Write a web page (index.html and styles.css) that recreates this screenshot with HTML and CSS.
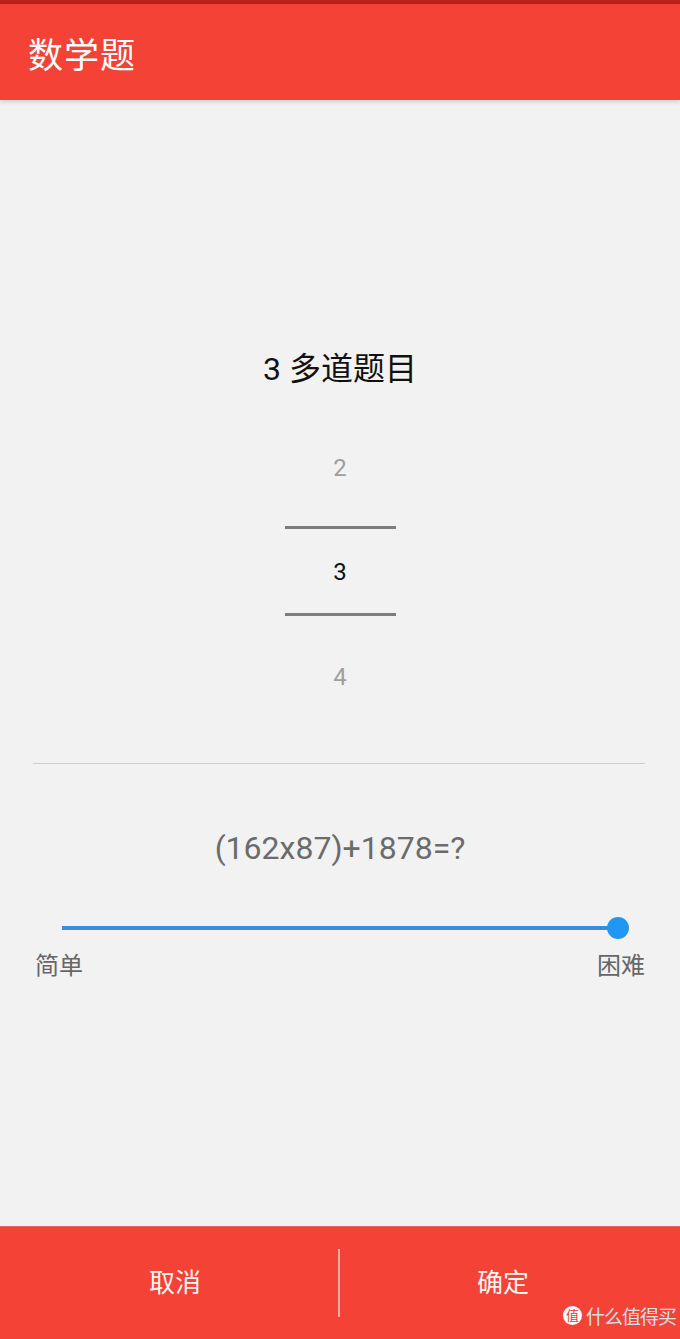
FILE: index.html
```html
<!DOCTYPE html>
<html lang="zh-CN">
<head>
    <meta charset="UTF-8">
    <meta name="viewport" content="width=device-width, initial-scale=1.0">
    <title>数学题</title>
    <link rel="stylesheet" href="styles.css">
</head>
<body>
    <div class="app">
        <div class="status-bar"></div>
        <header class="toolbar">
            <h1>数学题</h1>
        </header>

        <main class="content">
            <h2 class="count-title">3 多道题目</h2>

            <div class="picker">
                <div class="picker-item">2</div>
                <div class="picker-item selected">3</div>
                <div class="picker-item">4</div>
            </div>

            <hr class="divider">

            <div class="equation">(162x87)+1878=?</div>

            <div class="slider">
                <div class="slider-track">
                    <span class="slider-thumb"></span>
                </div>
            </div>
            <div class="slider-labels">
                <span>简单</span>
                <span>困难</span>
            </div>
        </main>

        <footer class="actions">
            <button class="action cancel">取消</button>
            <span class="action-sep"></span>
            <button class="action confirm">确定</button>
            <div class="watermark">
                <span class="wm-badge">值</span>
                <span class="wm-text">什么值得买</span>
            </div>
        </footer>
    </div>
</body>
</html>
```

FILE: styles.css
```css
body {
    margin: 0;
    font-family: Roboto, "Noto Sans CJK SC", sans-serif;
    background-color: #f2f2f2;
}
.app {
    height: 1339px;
    display: flex;
    flex-direction: column;
}
.status-bar {
    height: 4px;
    background-color: #b8211c;
}
.toolbar {
    height: 96px;
    display: flex;
    align-items: center;
    padding-left: 28px;
    background-color: #f44336;
    box-shadow: 0 2px 4px rgba(0,0,0,0.15);
    position: relative;
}
.toolbar h1 {
    margin: 0;
    color: #fff;
    font-size: 35px;
    font-weight: normal;
    letter-spacing: 1px;
}
.content {
    flex: 1;
    display: flex;
    flex-direction: column;
}
.count-title {
    margin: 249px 0 0;
    text-align: center;
    font-size: 32px;
    line-height: 40px;
    font-weight: normal;
    color: #111;
}
.picker {
    margin-top: 39px;
    display: flex;
    flex-direction: column;
    align-items: center;
}
.picker-item {
    width: 111px;
    height: 80px;
    line-height: 80px;
    text-align: center;
    font-size: 24px;
    color: #9e9e9e;
}
.picker-item.selected {
    margin: 18px 0 21px;
    height: 84px;
    line-height: 86px;
    color: #111;
    border-top: 3px solid #7d7d7d;
    border-bottom: 3px solid #7d7d7d;
}
.divider {
    margin: 46px 35px 0 33px;
    border: none;
    border-top: 1px solid #cfcfcf;
}
.equation {
    margin-top: 64px;
    text-align: center;
    font-size: 32px;
    line-height: 40px;
    color: #6b6b6b;
}
.slider {
    margin-top: 40px;
    height: 40px;
    padding: 0 62px;
    display: flex;
    align-items: center;
}
.slider-track {
    flex: 1;
    height: 4px;
    background-color: #3a8dd6;
    position: relative;
}
.slider-thumb {
    position: absolute;
    right: -11px;
    top: -9px;
    width: 22px;
    height: 22px;
    border-radius: 50%;
    background-color: #2196f3;
}
.slider-labels {
    margin: 3px 35px 0;
    display: flex;
    justify-content: space-between;
    font-size: 24px;
    line-height: 30px;
    color: #666;
}
.actions {
    height: 112px;
    display: flex;
    align-items: center;
    background-color: #f44336;
    border-top: 1px solid #e9665c;
    position: relative;
}
.action {
    flex: 1;
    height: 100%;
    padding: 0 0 6px;
    border: none;
    background: none;
    color: #fff3f0;
    font-family: inherit;
    font-size: 26px;
    cursor: pointer;
}
.action.cancel {
    padding-left: 12px;
}
.action.confirm {
    padding-right: 14px;
}
.action-sep {
    width: 2px;
    height: 68px;
    background-color: #f7aaa3;
}
.watermark {
    position: absolute;
    right: 4px;
    bottom: 10px;
    display: flex;
    align-items: center;
    gap: 4px;
}
.wm-badge {
    width: 19px;
    height: 19px;
    border-radius: 50%;
    background-color: #fff;
    color: #e53935;
    font-size: 13px;
    line-height: 19px;
    text-align: center;
}
.wm-text {
    font-size: 19px;
    color: #cfe1ea;
    letter-spacing: -1px;
}
```
